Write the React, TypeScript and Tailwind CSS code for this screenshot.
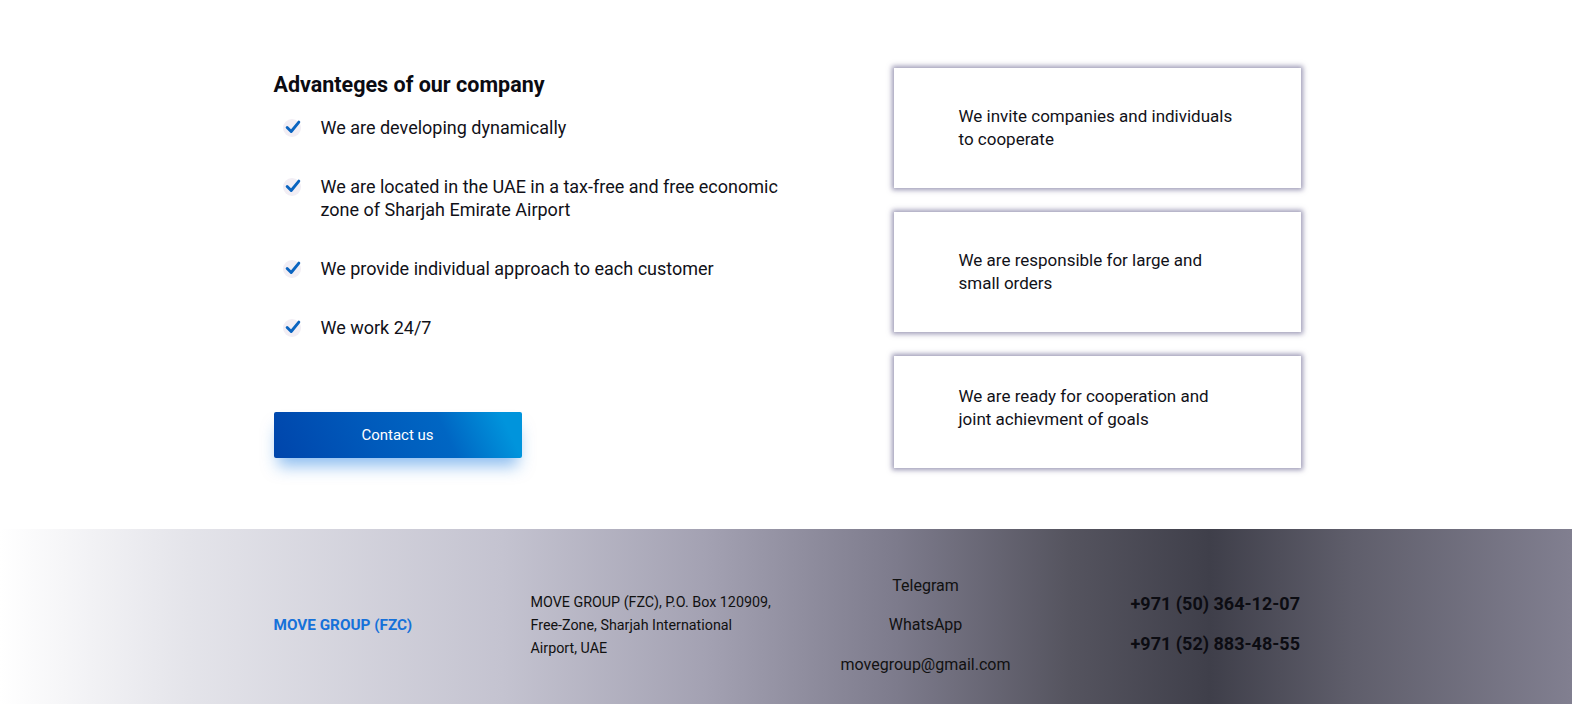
import React from 'react';

const advantages = [
  ['We are developing dynamically'],
  ['We are located in the UAE in a tax-free and free economic', 'zone of Sharjah Emirate Airport'],
  ['We provide individual approach to each customer'],
  ['We work 24/7'],
];

const cards = [
  { lines: ['We invite companies and individuals', 'to cooperate'], h: 'h-[120px]' },
  { lines: ['We are responsible for large and', 'small orders'], h: 'h-[120px]' },
  { lines: ['We are ready for cooperation and', 'joint achievment of goals'], h: 'h-[112px] pb-[8px]' },
];

const Check = () => (
  <span className="relative flex h-[18px] w-[18px] flex-shrink-0 items-center justify-center rounded-full bg-[#f2eef4]">
    <svg viewBox="0 0 20 20" className="absolute left-[1px] top-[-1px] h-[18px] w-[18px]">
      <path d="M3.5 10.5 L8 15 L16.5 4.5" fill="none" stroke="#0a64c0" strokeWidth="3.2" strokeLinecap="round" strokeLinejoin="round" />
    </svg>
  </span>
);

const App = () => {
  return (
    <div className="min-h-screen bg-white text-[#111118]" style={{ fontFamily: 'Roboto, "Liberation Sans", sans-serif' }}>
      {/* Advantages */}
      <section className="mx-auto flex w-[1029px] justify-between pt-[68px] pb-[61px] pl-[2px]">
        <div className="pt-[3px]">
          <h2 className="text-[21.5px] font-bold leading-[28px] text-[#0b0b12]">Advanteges of our company</h2>
          <ul className="mt-[17px] flex flex-col gap-[36px] pl-[9px]">
            {advantages.map((lines, i) => (
              <li key={i} className="flex items-start gap-[20px] text-[18px] leading-[23px]">
                <span className="mt-[3px]">
                  <Check />
                </span>
                <span>
                  {lines.map((l) => (
                    <span key={l} className="block">{l}</span>
                  ))}
                </span>
              </li>
            ))}
          </ul>
          <button className="mt-[73px] flex h-[46px] w-[248px] items-center justify-center rounded-[2px] bg-[linear-gradient(65deg,#0045ab_0%,#005abb_40%,#0066c3_68%,#0094dc_92%)] text-[15px] font-normal text-white shadow-[0_12px_16px_-4px_rgba(30,125,225,0.5)]">
            Contact us
          </button>
        </div>

        <div className="flex flex-col gap-[24px]">
          {cards.map((c, i) => (
            <div
              key={i}
              className={`flex ${c.h} w-[407px] flex-col justify-center bg-white pl-[65px] text-[17px] leading-[23.5px] shadow-[0_0_5px_2px_rgba(75,70,120,0.55)]`}
            >
              {c.lines.map((l) => (
                <span key={l}>{l}</span>
              ))}
            </div>
          ))}
        </div>
      </section>

      {/* Footer */}
      <footer className="h-[177px] bg-[linear-gradient(90deg,#ffffff_0%,#e4e4ea_12%,#c4c3d0_32%,#a3a1b2_45%,#7d7b8c_57%,#55545f_68%,#3f3f4a_77%,#5f5e6b_86%,#817f90_100%)]">
        <div className="mx-auto flex h-full w-[1029px] items-center pt-[15px] pl-[2px]">
          <div className="w-[257px] shrink-0 text-[15.3px] font-bold text-[#1671d9]">MOVE GROUP (FZC)</div>
          <div className="w-[250px] shrink-0 text-[14.3px] leading-[23px] text-[#111]">
            MOVE GROUP (FZC), P.O. Box 120909,
            <br />
            Free-Zone, Sharjah International
            <br />
            Airport, UAE
          </div>
          <div className="ml-[45px] flex w-[200px] shrink-0 flex-col items-center gap-[15.5px] text-[16px] leading-[24px] text-[#111]">
            <span>Telegram</span>
            <span>WhatsApp</span>
            <span>movegroup@gmail.com</span>
          </div>
          <div className="ml-[105px] -mt-[4px] flex shrink-0 flex-col gap-[17px] whitespace-nowrap text-[18px] font-bold leading-[23px] text-[#0c0c12]">
            <span>+971 (50) 364-12-07</span>
            <span>+971 (52) 883-48-55</span>
          </div>
        </div>
      </footer>
    </div>
  );
};

export default App;
